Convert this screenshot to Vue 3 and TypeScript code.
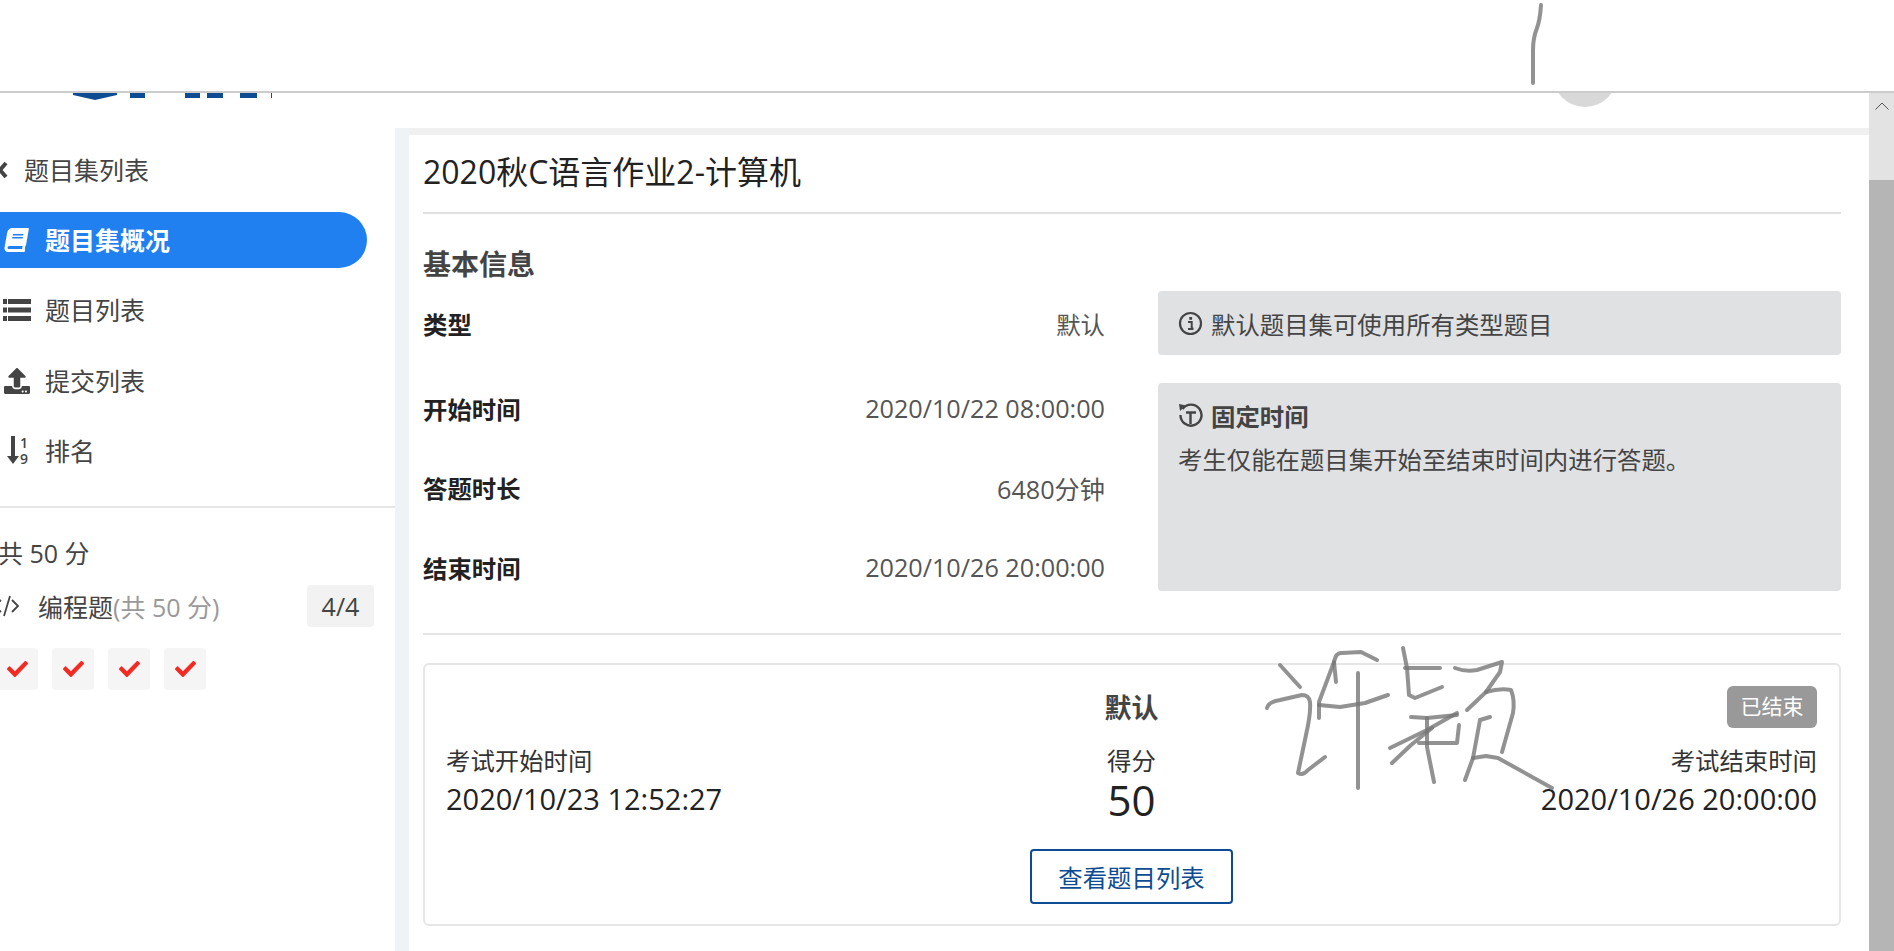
<script setup lang="ts">
// Exam set overview page: sidebar navigation, basic info and result card

const timeRows = [
  { label: '开始时间', value: '2020/10/22 08:00:00' },
  { label: '答题时长', value: '6480分钟' },
  { label: '结束时间', value: '2020/10/26 20:00:00' },
]

const checks = [1, 2, 3, 4]

// Handwritten pen strokes that lie over the page
const penStrokes = [
  'M1541 5 Q1540 20 1537 28 Q1533 38 1533 50 L1533 83',
  'M1280 665 L1300 687',
  'M1267 708 Q1268 702 1280 700 L1302 695 Q1309 695 1310 702 Q1311 713 1306 735 L1298 773 Q1303 776 1308 770 L1325 757',
  'M1336 682 L1334 662 Q1336 652 1342 653 L1361 652 L1377 660',
  'M1334 662 L1319 702 L1319 718',
  'M1319 705 L1340 707 L1365 703 L1388 695',
  'M1358 673 L1358 788',
  'M1403 648 L1407 668 L1409 695 L1415 698 L1442 687',
  'M1405 668 L1440 668',
  'M1455 668 Q1465 672 1477 670 L1502 662 L1500 672 L1486 692 L1467 710',
  'M1486 692 Q1500 688 1511 690 Q1515 700 1513 713 L1502 752',
  'M1490 717 L1480 720 L1473 758 L1465 780',
  'M1473 758 L1486 756 L1498 758 L1552 788',
  'M1411 717 L1427 718 L1457 715',
  'M1390 748 L1427 730 L1457 713',
  'M1392 763 L1411 745 L1432 728',
  'M1427 718 L1427 747 L1434 782',
  'M1419 743 L1457 743 L1459 725',
]
</script>

<template>
  <div class="page">
    <!-- Blank band at the top of the capture -->
    <div class="top-band"></div>

    <div class="viewport">
      <div class="scroll-area">
        <!-- Site header, mostly hidden under the band -->
        <header class="site-header">
          <svg class="logo" width="200" height="7" viewBox="0 0 200 7">
            <path d="M0 0 H44 V2 L22 7 L0 2 Z" fill="#0d4c92" />
            <rect x="57" y="0" width="15" height="5" fill="#0d4c92" />
            <rect x="112" y="0" width="15" height="5" fill="#0d4c92" />
            <rect x="134" y="0" width="16" height="5" fill="#0d4c92" />
            <rect x="167" y="0" width="17" height="5" fill="#0d4c92" />
            <rect x="198" y="0" width="1" height="5" fill="#0d4c92" />
          </svg>
          <div class="avatar"></div>
        </header>

        <div class="layout">
          <!-- Sidebar, scrolled a little to the left -->
          <aside class="sidebar">
            <div class="sidebar-inner">
              <nav class="nav">
                <a class="nav-item back">
                  <svg class="back-icon" width="10" height="20" viewBox="0 0 10 20">
                    <path d="M8 3 L2 10 L8 17" fill="none" stroke="#444" stroke-width="4" />
                  </svg>
                  <span>题目集列表</span>
                </a>
                <a class="nav-item active">
                  <svg class="nav-icon" width="26" height="24" viewBox="0 0 26 24">
                    <g transform="translate(4 0) skewX(-10) scale(0.0469)">
                      <path fill="#fff" d="M448 360V24c0-13.300-10.700-24-24-24H96C43 0 0 43 0 96v320c0 53 43 96 96 96h328c13.300 0 24-10.700 24-24v-16c0-7.500-3.500-14.300-8.900-18.700-4.200-15.400-4.200-59.300 0-74.700 5.400-4.300 8.900-11.100 8.900-18.600zM128 134c0-3.300 2.700-6 6-6h212c3.300 0 6 2.700 6 6v20c0 3.300-2.700 6-6 6H134c-3.300 0-6-2.700-6-6v-20zm0 64c0-3.300 2.700-6 6-6h212c3.300 0 6 2.700 6 6v20c0 3.300-2.700 6-6 6H134c-3.300 0-6-2.700-6-6v-20zm253.400 250H96c-17.700 0-32-14.300-32-32 0-17.600 14.400-32 32-32h285.400c-1.900 17.100-1.900 46.900 0 64z" />
                    </g>
                  </svg>
                  <span>题目集概况</span>
                </a>
                <a class="nav-item">
                  <svg class="nav-icon" width="26" height="22" viewBox="0 0 26 22">
                    <g fill="#444">
                      <rect x="-1" y="0" width="4" height="5" />
                      <rect x="-1" y="8.500" width="4" height="5" />
                      <rect x="-1" y="17" width="4" height="5" />
                      <rect x="4" y="0" width="23" height="5" />
                      <rect x="4" y="8.500" width="23" height="5" />
                      <rect x="4" y="17" width="23" height="5" />
                    </g>
                  </svg>
                  <span>题目列表</span>
                </a>
                <a class="nav-item lower">
                  <svg class="nav-icon" width="26" height="26" viewBox="0 0 26 26">
                    <path transform="scale(0.0508)" fill="#444" d="M296 384h-80c-13.300 0-24-10.700-24-24V192h-87.700c-17.800 0-26.700-21.500-14.100-34.100L242.300 5.700c7.500-7.500 19.800-7.500 27.300 0l152.200 152.200c12.600 12.600 3.700 34.100-14.100 34.100H320v168c0 13.300-10.700 24-24 24zm216-8v112c0 13.300-10.700 24-24 24H24c-13.300 0-24-10.700-24-24V376c0-13.300 10.700-24 24-24h136v8c0 30.900 25.100 56 56 56h80c30.900 0 56-25.100 56-56v-8h136c13.300 0 24 10.700 24 24zm-124 88c0-11-9-20-20-20s-20 9-20 20 9 20 20 20 20-9 20-20zm64 0c0-11-9-20-20-20s-20 9-20 20 9 20 20 20 20-9 20-20z" />
                  </svg>
                  <span>提交列表</span>
                </a>
                <a class="nav-item">
                  <svg class="nav-icon" width="26" height="30" viewBox="0 0 26 30">
                    <path d="M5 1 H9 V21 H13 L7 29 L1 21 H5 Z" fill="#444" transform="translate(2 -1)" />
                    <text x="16" y="11.500" class="digit">1</text>
                    <text x="16" y="27.500" class="digit">9</text>
                  </svg>
                  <span>排名</span>
                </a>
              </nav>

              <div class="score-block">
                <div class="total">共 50 分</div>
                <div class="type-row">
                  <svg class="code-icon" width="26" height="22" viewBox="0 0 26 22">
                    <path d="M7 5 L1 11 L7 17 M10 21 L16 1 M18 5 L24 11 L18 17" fill="none" stroke="#444" stroke-width="1.800" />
                  </svg>
                  <span class="type-name">编程题<span class="muted">(共 50 分)</span></span>
                  <span class="count">4/4</span>
                </div>
                <div class="checks">
                  <div v-for="c in checks" :key="c" class="check">
                    <svg width="21" height="16" viewBox="0 65 512 382" preserveAspectRatio="none">
                      <path fill="#f22a22" d="M173.900 439.400l-166.400-166.400c-10-10-10-26.200 0-36.200l36.200-36.200c10-10 26.200-10 36.200 0L192 312.700 432.100 72.600c10-10 26.200-10 36.200 0l36.200 36.200c10 10 10 26.200 0 36.200l-294.400 294.400c-10 10-26.200 10-36.200 0z" />
                    </svg>
                  </div>
                </div>
              </div>
            </div>
          </aside>

          <div class="gutter"></div>

          <main class="main">
            <div class="main-top"></div>
            <div class="content">
              <h1 class="title">2020秋C语言作业2-计算机</h1>
              <h2 class="heading">基本信息</h2>

              <div class="info-grid">
                <div class="info-row first">
                  <span class="label">类型</span>
                  <span class="value">默认</span>
                </div>
                <div class="note">
                  <svg class="note-icon" width="25" height="25" viewBox="0 0 25 25">
                    <circle cx="12.500" cy="12.500" r="10.500" fill="none" stroke="#444" stroke-width="2.200" />
                    <rect x="11.300" y="6" width="2.800" height="2.800" fill="#444" />
                    <path d="M10 11 H13.700 V17.500 H15.500 M10 18 H15.500" fill="none" stroke="#444" stroke-width="2" />
                  </svg>
                  <span>默认题目集可使用所有类型题目</span>
                </div>

                <div class="time-rows">
                  <div v-for="row in timeRows" :key="row.label" class="info-row">
                    <span class="label">{{ row.label }}</span>
                    <span class="value">{{ row.value }}</span>
                  </div>
                </div>
                <div class="note note-large">
                  <div class="note-title">
                    <svg class="note-icon" width="25" height="25" viewBox="0 0 25 25">
                      <path d="M4.500 6 A10.500 10.500 0 1 1 2.500 12" fill="none" stroke="#444" stroke-width="2.400" />
                      <path d="M1 1 L8 2.500 L2 8 Z" fill="#444" />
                      <path d="M8 9.500 H18 M12.500 9.500 V21" fill="none" stroke="#444" stroke-width="2.400" />
                    </svg>
                    <strong>固定时间</strong>
                  </div>
                  <p>考生仅能在题目集开始至结束时间内进行答题。</p>
                </div>
              </div>

              <div class="result-card">
                <div></div>
                <div class="result-type">默认</div>
                <div class="badge-cell"><span class="badge">已结束</span></div>

                <div class="stat">
                  <div class="stat-label">考试开始时间</div>
                  <div class="stat-value">2020/10/23 12:52:27</div>
                </div>
                <div class="stat center">
                  <div class="stat-label">得分</div>
                  <div class="stat-score">50</div>
                </div>
                <div class="stat right">
                  <div class="stat-label">考试结束时间</div>
                  <div class="stat-value">2020/10/26 20:00:00</div>
                </div>

                <button class="list-btn" type="button">查看题目列表</button>
              </div>
            </div>
          </main>
        </div>
      </div>

      <!-- Browser scrollbar -->
      <div class="scrollbar">
        <div class="scroll-track">
          <svg width="14" height="8" viewBox="0 0 14 8">
            <path d="M0.500 7.500 L7 1 L13.500 7.500" fill="none" stroke="#555" stroke-width="1" />
          </svg>
        </div>
        <div class="scroll-thumb"></div>
      </div>
    </div>

    <!-- Pen annotation drawn over the page -->
    <svg class="pen" width="1894" height="951" viewBox="0 0 1894 951">
      <path v-for="(d, i) in penStrokes" :key="i" :d="d" />
    </svg>
  </div>
</template>

<style scoped>
.page {
  position: relative;
  width: 1894px;
  height: 951px;
  overflow: hidden;
  background: #fff;
  font-family: "Open Sans", "Noto Sans CJK SC", sans-serif;
  font-size: 24.4px;
  color: #444;
}

.top-band {
  height: 91px;
  background: #fff;
  border-bottom: 2px solid #ccc;
}

.viewport {
  display: flex;
  height: 858px;
}

.scroll-area {
  flex: 1;
  min-width: 0;
}

/* Header */
.site-header {
  display: flex;
  justify-content: space-between;
  height: 35px;
  overflow: hidden;
}

.logo {
  display: block;
  margin-left: 73px;
}

.avatar {
  width: 64px;
  height: 64px;
  margin-top: -50px;
  margin-right: 252px;
  border-radius: 50%;
  background: #d8d8d8;
}

.layout {
  display: flex;
  height: 823px;
}

/* Sidebar */
.sidebar {
  width: 395px;
  flex-shrink: 0;
  overflow: hidden;
}

.sidebar-inner {
  width: 415px;
  margin-left: -20px;
  padding-top: 14px;
  box-sizing: border-box;
}

.nav {
  display: flex;
  flex-direction: column;
  gap: 14px;
  padding-bottom: 27px;
  border-bottom: 2px solid #e6e6e6;
}

.nav-item {
  display: flex;
  align-items: center;
  width: 387px;
  height: 56px;
  padding-left: 24px;
  box-sizing: border-box;
  border-radius: 0 28px 28px 0;
  font-size: 25px;
  line-height: 54px;
}

.lower {
  margin-top: 1px;
}

.nav-icon {
  width: 26px;
  margin-right: 15px;
  overflow: visible;
  flex-shrink: 0;
}

.back {
  padding-left: 18px;
}

.back-icon {
  margin-right: 16px;
  flex-shrink: 0;
}

.active {
  background: #2080f0;
  color: #fff;
  font-weight: 700;
}

.digit {
  font-family: "Open Sans", sans-serif;
  font-size: 14px;
  font-weight: 600;
  fill: #444;
}

.score-block {
  padding: 25px 21px 0 18px;
  font-size: 25px;
}

.total {
  line-height: 40px;
}

.type-row {
  display: flex;
  align-items: center;
  height: 42px;
  margin-top: 12px;
}

.code-icon {
  margin-left: -4px;
  margin-right: 18px;
  flex-shrink: 0;
}

.type-name {
  flex: 1;
}

.muted {
  color: #999;
}

.count {
  width: 67px;
  height: 42px;
  line-height: 42px;
  text-align: center;
  background: #f2f2f2;
  border-radius: 4px;
}

.checks {
  display: flex;
  gap: 14px;
  margin-top: 21px;
  margin-left: -2px;
}

.check {
  display: flex;
  align-items: center;
  justify-content: center;
  width: 42px;
  height: 42px;
  background: #f5f5f5;
  border-radius: 4px;
}

.gutter {
  width: 14px;
  flex-shrink: 0;
  background: #eef3f6;
}

/* Main content */
.main {
  flex: 1;
  min-width: 0;
}

.main-top {
  height: 7px;
  background: #f0f0f0;
}

.content {
  padding: 15px 28px 0 14px;
}

.title {
  margin: 0;
  padding-bottom: 18px;
  border-bottom: 2px solid #e0e0e0;
  font-size: 32px;
  line-height: 44px;
  font-weight: 400;
  color: #222;
}

.heading {
  margin: 30px 0 0;
  padding-bottom: 1px;
  font-size: 28px;
  line-height: 40px;
  font-weight: 700;
  color: #444;
}

.info-grid {
  display: grid;
  grid-template-columns: 682px 683px;
  column-gap: 53px;
  row-gap: 28px;
  margin-top: 6px;
  padding-bottom: 42px;
  border-bottom: 2px solid #e6e6e6;
}

.info-row {
  display: flex;
  justify-content: space-between;
  align-items: center;
  height: 54px;
  flex-shrink: 0;
}

.info-row.first {
  height: 64px;
}

.time-rows {
  display: flex;
  flex-direction: column;
  gap: 25.500px;
  height: 208px;
  margin-top: -2px;
  margin-bottom: 2px;
}

.label {
  font-weight: 700;
  color: #222;
}

.value {
  color: #555;
}

.time-rows .value {
  font-size: 25.200px;
}

.note {
  display: flex;
  align-items: center;
  gap: 8px;
  height: 64px;
  padding: 0 20px;
  box-sizing: border-box;
  background: #e0e1e3;
  border-radius: 4px;
}

.note-large {
  display: block;
  align-self: start;
  height: 208px;
  padding-top: 12px;
}

.note-title {
  display: flex;
  align-items: center;
  gap: 8px;
  height: 40px;
}

.note-icon {
  flex-shrink: 0;
}

.note p {
  margin: 5px 0 0;
  line-height: 40px;
}

/* Result card */
.result-card {
  display: grid;
  grid-template-columns: 1fr auto 1fr;
  align-items: start;
  height: 263px;
  margin-top: 28px;
  padding: 21px 22px 21px 21px;
  box-sizing: border-box;
  border: 2px solid #e6e6e6;
  border-radius: 6px;
}

.result-type {
  margin-top: 2px;
  font-size: 27px;
  font-weight: 700;
  line-height: 40px;
  text-align: center;
}

.badge-cell {
  height: 42px;
  text-align: right;
}

.badge {
  display: inline-block;
  width: 90px;
  height: 42px;
  line-height: 40px;
  text-align: center;
  font-size: 21px;
  color: #fff;
  background: #999;
  border-radius: 6px;
}

.stat {
  margin-top: 13px;
  color: #222;
}

.stat.center {
  text-align: center;
}

.stat.right {
  text-align: right;
}

.stat-label {
  line-height: 40px;
  color: #333;
}

.stat-value {
  margin-top: -2px;
  padding-bottom: 2px;
  font-size: 29px;
  line-height: 40px;
}

.stat-score {
  margin-top: -1px;
  padding-bottom: 1px;
  font-size: 42px;
  line-height: 40px;
}

.list-btn {
  grid-column: 1 / -1;
  justify-self: center;
  width: 203px;
  height: 55px;
  margin-top: 28px;
  padding: 0;
  font-family: inherit;
  font-size: 24.400px;
  color: #0d4c92;
  background: #fff;
  border: 2px solid #0d4c92;
  border-radius: 4px;
}

/* Scrollbar */
.scrollbar {
  display: flex;
  flex-direction: column;
  width: 25px;
  flex-shrink: 0;
}

.scroll-track {
  display: flex;
  justify-content: center;
  height: 87px;
  padding-top: 9px;
  box-sizing: border-box;
  background: #e3e3e3;
}

.scroll-thumb {
  flex: 1;
  background: #b5b5b5;
}

/* Pen annotation */
.pen {
  position: absolute;
  top: 0;
  left: 0;
  pointer-events: none;
}

.pen path {
  fill: none;
  stroke: #777;
  stroke-opacity: 0.8;
  stroke-width: 4;
  stroke-linecap: round;
  stroke-linejoin: round;
}
</style>
